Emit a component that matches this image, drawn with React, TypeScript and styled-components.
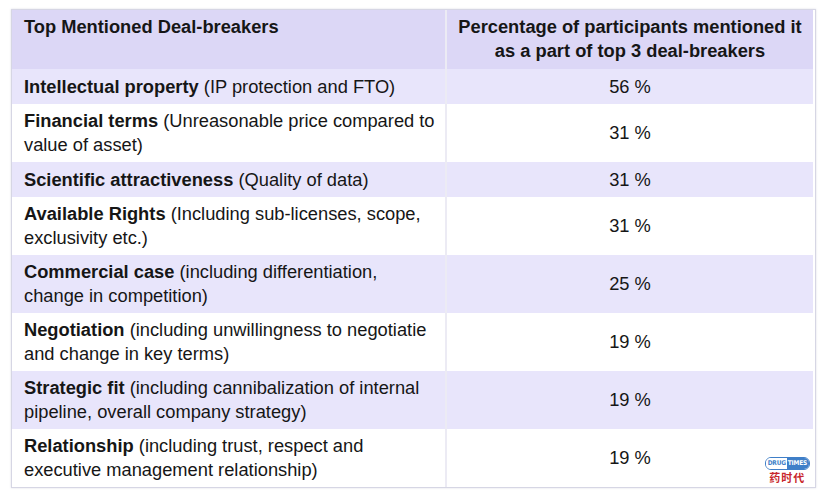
import styled, { createGlobalStyle } from "styled-components";

const GlobalStyle = createGlobalStyle`
    html, body {
        margin: 0;
        padding: 0;
        background: #ffffff;
    }
    body {
        font-family: "Liberation Sans", Arial, sans-serif;
        color: #161616;
    }
`;

type Row = {
    title: string;
    note: string;
    rest?: string;
    value: string;
};

// line breaks follow the reference picture
const rows: Row[] = [
    { title: "Intellectual property", note: "(IP protection and FTO)", value: "56 %" },
    { title: "Financial terms", note: "(Unreasonable price compared to", rest: "value of asset)", value: "31 %" },
    { title: "Scientific attractiveness", note: "(Quality of data)", value: "31 %" },
    { title: "Available Rights", note: "(Including sub-licenses, scope,", rest: "exclusivity etc.)", value: "31 %" },
    { title: "Commercial case", note: "(including differentiation,", rest: "change in competition)", value: "25 %" },
    { title: "Negotiation", note: "(including unwillingness to negotiatie", rest: "and change in key terms)", value: "19 %" },
    { title: "Strategic fit", note: "(including cannibalization of internal", rest: "pipeline, overall company strategy)", value: "19 %" },
    { title: "Relationship", note: "(including trust, respect and", rest: "executive management relationship)", value: "19 %" },
];

const App = function() {
    return (
        <Page>
            <GlobalStyle />
            <Frame>
                <Table>
                    <thead>
                        <tr>
                            <HeadCell $align="left">Top Mentioned Deal-breakers</HeadCell>
                            <HeadCell $align="center">
                                Percentage of participants mentioned it<br />
                                as a part of top 3 deal-breakers
                            </HeadCell>
                        </tr>
                    </thead>
                    <tbody>
                        {rows.map((row, i) => (
                            <BodyRow key={row.title} $shaded={i % 2 === 0}>
                                <LabelCell>
                                    <b>{row.title}</b> {row.note}
                                    {row.rest && <><br />{row.rest}</>}
                                </LabelCell>
                                <ValueCell>{row.value}</ValueCell>
                            </BodyRow>
                        ))}
                    </tbody>
                </Table>
                <Logo>
                    <Pill>
                        <PillLeft>DRUG</PillLeft>
                        <PillRight>TIMES</PillRight>
                    </Pill>
                    <LogoCn>药时代</LogoCn>
                </Logo>
            </Frame>
        </Page>
    )
}

export default App;

const Page = styled.div`
    width: 830px;
    height: 498px;
    padding: 9px 0 0 11px;
    box-sizing: border-box;
`

const Frame = styled.div`
    position: relative;
    width: 803px;
    border: 1px solid #d6d6e4;
    box-shadow: 0 0 2px rgba(120, 120, 160, 0.25);
`

const Table = styled.table`
    width: 801px;
    border-collapse: collapse;
    table-layout: fixed;
    font-size: 18.3px;
    line-height: 24px;

    td, th {
        padding: 5px 4px 5px 12px;
        white-space: nowrap;
    }

    td:first-child, th:first-child {
        width: 417px;
        border-right: 2px solid #ecebf4;
    }

    td:last-child, th:last-child {
        padding: 5px 4px;
    }
`

const HeadCell = styled.th<{ $align: "left" | "center" }>`
    background: #dcd7f6;
    font-weight: bold;
    text-align: ${p => p.$align};
    vertical-align: top;
    height: 49px;
`

const BodyRow = styled.tr<{ $shaded: boolean }>`
    background: ${p => p.$shaded ? "#e8e5fb" : "#ffffff"};
`

const LabelCell = styled.td`
    text-align: left;
    vertical-align: middle;
    height: 25px;

    b {
        font-weight: bold;
    }
`

const ValueCell = styled.td`
    text-align: center;
    vertical-align: middle;
`

const Logo = styled.div`
    position: absolute;
    right: 5px;
    bottom: 3px;
    display: flex;
    flex-direction: column;
    align-items: center;
    gap: 1px;
`

const Pill = styled.div`
    display: flex;
    height: 11px;
    border: 1px solid #3f7fc8;
    border-radius: 6px;
    overflow: hidden;
    font-family: "DejaVu Sans Condensed", "Liberation Sans Narrow", sans-serif;
    font-size: 6.5px;
    font-weight: bold;
    line-height: 11px;
    letter-spacing: -0.2px;
`

const PillLeft = styled.span`
    background: #ffffff;
    color: #3f7fc8;
    padding: 0 1px 0 2px;
`

const PillRight = styled.span`
    background: #3f7fc8;
    color: #ffffff;
    padding: 0 2px 0 1px;
`

const LogoCn = styled.div`
    font-family: "Noto Sans CJK SC", sans-serif;
    font-size: 11px;
    line-height: 13px;
    font-weight: bold;
    color: #c8272d;
    letter-spacing: 1px;
`
